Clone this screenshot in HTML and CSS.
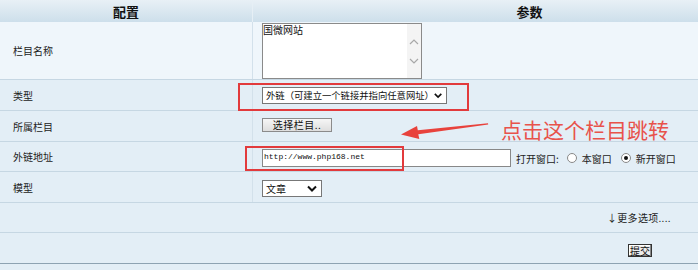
FILE: index.html
```html
<!DOCTYPE html>
<html lang="zh">
<head>
<meta charset="utf-8">
<title>栏目配置</title>
<link rel="stylesheet" href="styles.css">
</head>
<body>
<div class="page">
  <div class="form">
    <div class="row head">
      <div class="cell left">配置</div>
      <div class="cell right">参数</div>
    </div>
    <div class="row first">
      <div class="cell left label">栏目名称</div>
      <div class="cell right">
        <div class="textarea">
          <div class="ta-text">国微网站</div>
          <div class="ta-scroll">
            <svg width="10" height="6" viewBox="0 0 10 6"><path d="M1 5 L5 1 L9 5" fill="none" stroke="#a8a8a8" stroke-width="1.2"/></svg>
            <svg width="10" height="6" viewBox="0 0 10 6"><path d="M1 1 L5 5 L9 1" fill="none" stroke="#a8a8a8" stroke-width="1.2"/></svg>
          </div>
        </div>
      </div>
    </div>
    <div class="row">
      <div class="cell left label">类型</div>
      <div class="cell right">
        <div class="select wide"><span class="sel-text">外链（可建立一个链接并指向任意网址）</span>
          <svg width="10" height="7" viewBox="0 0 10 7"><path d="M1 1.5 L5 5.5 L9 1.5" fill="none" stroke="#111" stroke-width="2"/></svg>
        </div>
      </div>
    </div>
    <div class="row">
      <div class="cell left label">所属栏目</div>
      <div class="cell right">
        <div class="btn">选择栏目..</div>
      </div>
    </div>
    <div class="row short">
      <div class="cell left label">外链地址</div>
      <div class="cell right">
        <div class="input">http://www.php168.net</div>
        <span class="opt-label">打开窗口:</span>
        <span class="radio"></span><span class="opt">本窗口</span>
        <span class="radio on"></span><span class="opt">新开窗口</span>
      </div>
    </div>
    <div class="row">
      <div class="cell left label">模型</div>
      <div class="cell right">
        <div class="select small"><span class="sel-text">文章</span>
          <svg width="10" height="7" viewBox="0 0 10 7"><path d="M1 1.5 L5 5.5 L9 1.5" fill="none" stroke="#111" stroke-width="2"/></svg>
        </div>
      </div>
    </div>
    <div class="row short merged">
      <div class="cell full more">↓更多选项....</div>
    </div>
    <div class="row merged last">
      <div class="cell full submit-cell"><span class="submit">提交</span></div>
    </div>
  </div>

  <div class="annot box1"></div>
  <div class="annot box2"></div>
  <svg class="annot arrow" width="698" height="270" viewBox="0 0 698 270">
    <polygon points="401,134.5 417,126 417.8,130.3 488,123.3 488.2,124.6 418.3,134.2 419.3,139" fill="#e8423c"/>
  </svg>
  <div class="annot note">点击这个栏目跳转</div>
</div>
</body>
</html>
```

FILE: styles.css
```css
html, body {
  margin: 0;
  padding: 0;
  overflow: hidden;
  background: #e3eef6;
}
body {
  width: 698px;
  height: 270px;
  font-family: "Noto Sans CJK SC", "Noto Sans", sans-serif;
  font-size: 10px;
  color: #222;
}
.page {
  position: relative;
  width: 698px;
  height: 270px;
  overflow: hidden;
}
.form {
  width: 797px;
}
.row {
  display: grid;
  grid-template-columns: 253px 544px;
  height: 30px;
  border-bottom: 1px solid #c6d7e3;
  background: #e3eef6;
}
.row.short { height: 29px; }
.row.first {
  height: 57px;
  background: #eff6fb;
}
.row.head {
  height: 22px;
  border-bottom: 0;
  background: linear-gradient(#e8f0f6, #cddfeb);
}
.row.merged { grid-template-columns: 797px; }
.row.last { border-bottom: 1px solid #8ea3b2; }
.cell {
  display: flex;
  align-items: center;
}
.left {
  border-right: 1px solid #d3e1eb;
}
.head .left, .head .right {
  justify-content: center;
  font-weight: bold;
  font-size: 13px;
  color: #111;
}
.head .left { border-right: 1px solid #e6eff5; }
.label {
  padding-left: 13px;
  color: #222;
}
.right {
  padding-left: 9px;
}
.textarea {
  width: 158px;
  height: 54px;
  border: 1px solid #8a8a8a;
  background: #fff;
  display: flex;
  margin-top: 1px;
}
.ta-text {
  flex: 1;
  line-height: 12px;
  font-size: 10px;
  color: #111;
}
.ta-scroll {
  width: 14px;
  background: #f4f4f4;
  display: flex;
  flex-direction: column;
  align-items: center;
  justify-content: center;
  gap: 13px;
}
.select {
  height: 15px;
  border: 1px solid #777;
  background: #fff;
  display: flex;
  align-items: center;
  justify-content: space-between;
  padding: 0 4px 0 3px;
  font-size: 10px;
  color: #111;
  box-sizing: content-box;
  white-space: nowrap;
  overflow: hidden;
}
.sel-text { line-height: 15px; }
.select.wide { width: 176px; margin-top: 1px; }
.select.wide .sel-text { font-size: 9.4px; letter-spacing: -0.05px; }
.select.small { width: 51px; margin-top: 2px; }
.btn {
  width: 68px;
  height: 12px;
  border: 1px solid #8b8b8b;
  background: linear-gradient(#f6f6f6, #dedede);
  display: flex;
  align-items: center;
  justify-content: center;
  font-size: 10px;
  color: #111;
  margin-top: -3px;
  letter-spacing: 0.5px;
}
.input {
  width: 246px;
  height: 16px;
  border: 1px solid #888;
  background: #fff;
  font-family: "Liberation Mono", monospace;
  font-size: 8px;
  line-height: 14px;
  padding-left: 1px;
  color: #111;
  margin-top: 3px;
}
.opt-label {
  margin-left: 5px;
  margin-top: 3px;
}
.radio {
  width: 10px;
  height: 10px;
  border: 1px solid #888;
  border-radius: 50%;
  background: #fff;
  box-sizing: border-box;
  margin: 3px 5px 0 8px;
  display: flex;
  align-items: center;
  justify-content: center;
}
.radio.on::after {
  content: "";
  width: 4px;
  height: 4px;
  border-radius: 50%;
  background: #111;
}
.opt { margin-top: 3px; }
.radio.on { margin-left: 9px; }
.full { padding-left: 0; }
.more {
  padding-left: 607px;
  font-size: 10px;
  color: #222;
  letter-spacing: 0.3px;
}
.submit-cell { padding-left: 628px; }
.submit {
  width: 22px;
  height: 11px;
  border: 1px solid #333;
  background: #ececec;
  font-size: 10px;
  line-height: 11px;
  text-align: center;
  color: #111;
  margin-top: 5px;
  box-shadow: inset -1px -1px 0 #888, inset 1px 1px 0 #fff;
}
.annot { position: absolute; }
.box1 {
  left: 238px;
  top: 83px;
  width: 227px;
  height: 24px;
  border: 2px solid #e23a3c;
}
.box2 {
  left: 245px;
  top: 146px;
  width: 155px;
  height: 21px;
  border: 2px solid #e23a3c;
}
.arrow {
  left: 0;
  top: 0;
}
.note {
  left: 501px;
  top: 116px;
  font-size: 21px;
  line-height: 26px;
  color: #e8524b;
  font-weight: 400;
}
```
